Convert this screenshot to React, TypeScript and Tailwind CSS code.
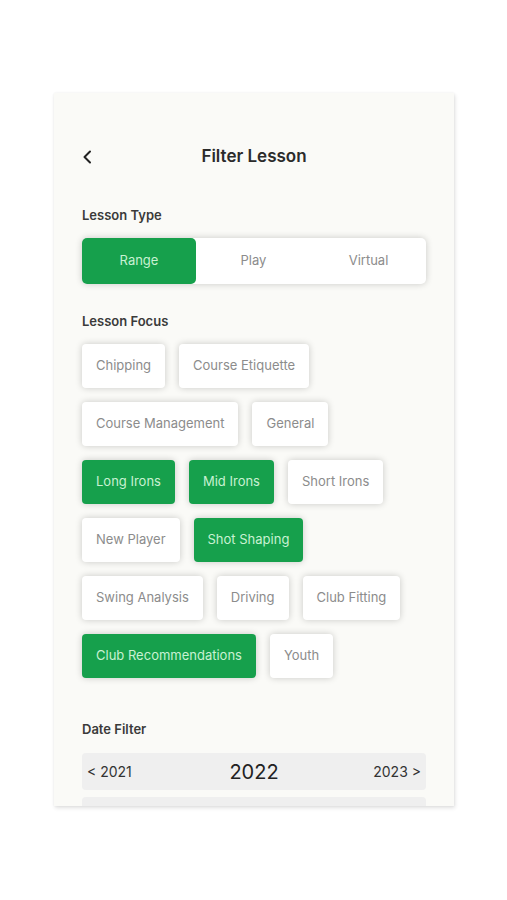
import React from "react";

const rows: { label: string; on?: boolean }[][] = [
  [{ label: "Chipping" }, { label: "Course Etiquette" }],
  [{ label: "Course Management" }, { label: "General" }],
  [{ label: "Long Irons", on: true }, { label: "Mid Irons", on: true }, { label: "Short Irons" }],
  [{ label: "New Player" }, { label: "Shot Shaping", on: true }],
  [{ label: "Swing Analysis" }, { label: "Driving" }, { label: "Club Fitting" }],
  [{ label: "Club Recommendations", on: true }, { label: "Youth" }],
];

export default function App() {
  return (
    <div className="min-h-[900px] bg-white pt-[93px]" style={{ fontFamily: "Inter, 'Liberation Sans', sans-serif" }}>
      <div className="ml-[54px] w-[400px] h-[713px] overflow-hidden bg-[#fafaf7] px-[28px] pt-[52px] shadow-[1px_2px_4px_rgba(0,0,0,0.12),0_0_2px_rgba(0,0,0,0.06)]">
        <div className="relative flex h-6 items-center justify-center">
          <svg className="absolute left-[0px] top-[5px]" width="12" height="14" viewBox="0 0 12 14" fill="none">
            <path d="M8 1.5 L2.5 7 L8 12.5" stroke="#222" strokeWidth="2" strokeLinecap="round" strokeLinejoin="round" />
          </svg>
          <span className="text-[17px] font-semibold text-[#2b2b2b]">Filter Lesson</span>
        </div>

        <div className="mt-[37px] h-[18px] text-[13px] font-semibold leading-[18px] text-[#3a3a3a]">Lesson Type</div>
        <div className="mt-[14px] flex h-[46px] rounded-[5px] bg-white shadow-[0_0_7px_rgba(0,0,0,0.2)]">
          <div className="flex w-[114px] items-center justify-center rounded-[5px] bg-[#16a04c] text-[13px] text-[#c8f1d2]">Range</div>
          <div className="flex flex-1 items-center justify-center text-[13px] text-[#8c8c8c]">Play</div>
          <div className="flex flex-1 items-center justify-center text-[13px] text-[#8c8c8c]">Virtual</div>
        </div>

        <div className="mt-[28px] h-[18px] text-[13px] font-semibold leading-[18px] text-[#3a3a3a]">Lesson Focus</div>
        <div className="mt-[14px] flex flex-col gap-[14px]">
          {rows.map((row, i) => (
            <div key={i} className="flex gap-[14px]">
              {row.map((c) => (
                <div
                  key={c.label}
                  className={
                    c.on
                      ? "flex h-[44px] items-center rounded-[4px] bg-[#16a04c] px-[14px] text-[13px] text-[#c8f1d2] shadow-[0_0_7px_rgba(0,0,0,0.2)]"
                      : "flex h-[44px] items-center rounded-[4px] bg-white px-[14px] text-[13px] text-[#8c8c8c] shadow-[0_0_7px_rgba(0,0,0,0.2)]"
                  }
                >
                  {c.label}
                </div>
              ))}
            </div>
          ))}
        </div>

        <div className="mt-[42px] h-[18px] text-[13px] font-semibold leading-[18px] text-[#3a3a3a]">Date Filter</div>
        <div className="mt-[15px] flex h-[37px] items-center justify-between rounded-[4px] bg-[#efefef] px-[5px]">
          <span className="w-[70px] text-[14px] text-[#333]">&lt; 2021</span>
          <span className="text-[20px] text-[#222]">2022</span>
          <span className="w-[70px] text-right text-[14px] text-[#333]">2023 &gt;</span>
        </div>
        <div className="mt-[7px] h-[40px] rounded-[4px] bg-[#efefef]" />
      </div>
    </div>
  );
}
